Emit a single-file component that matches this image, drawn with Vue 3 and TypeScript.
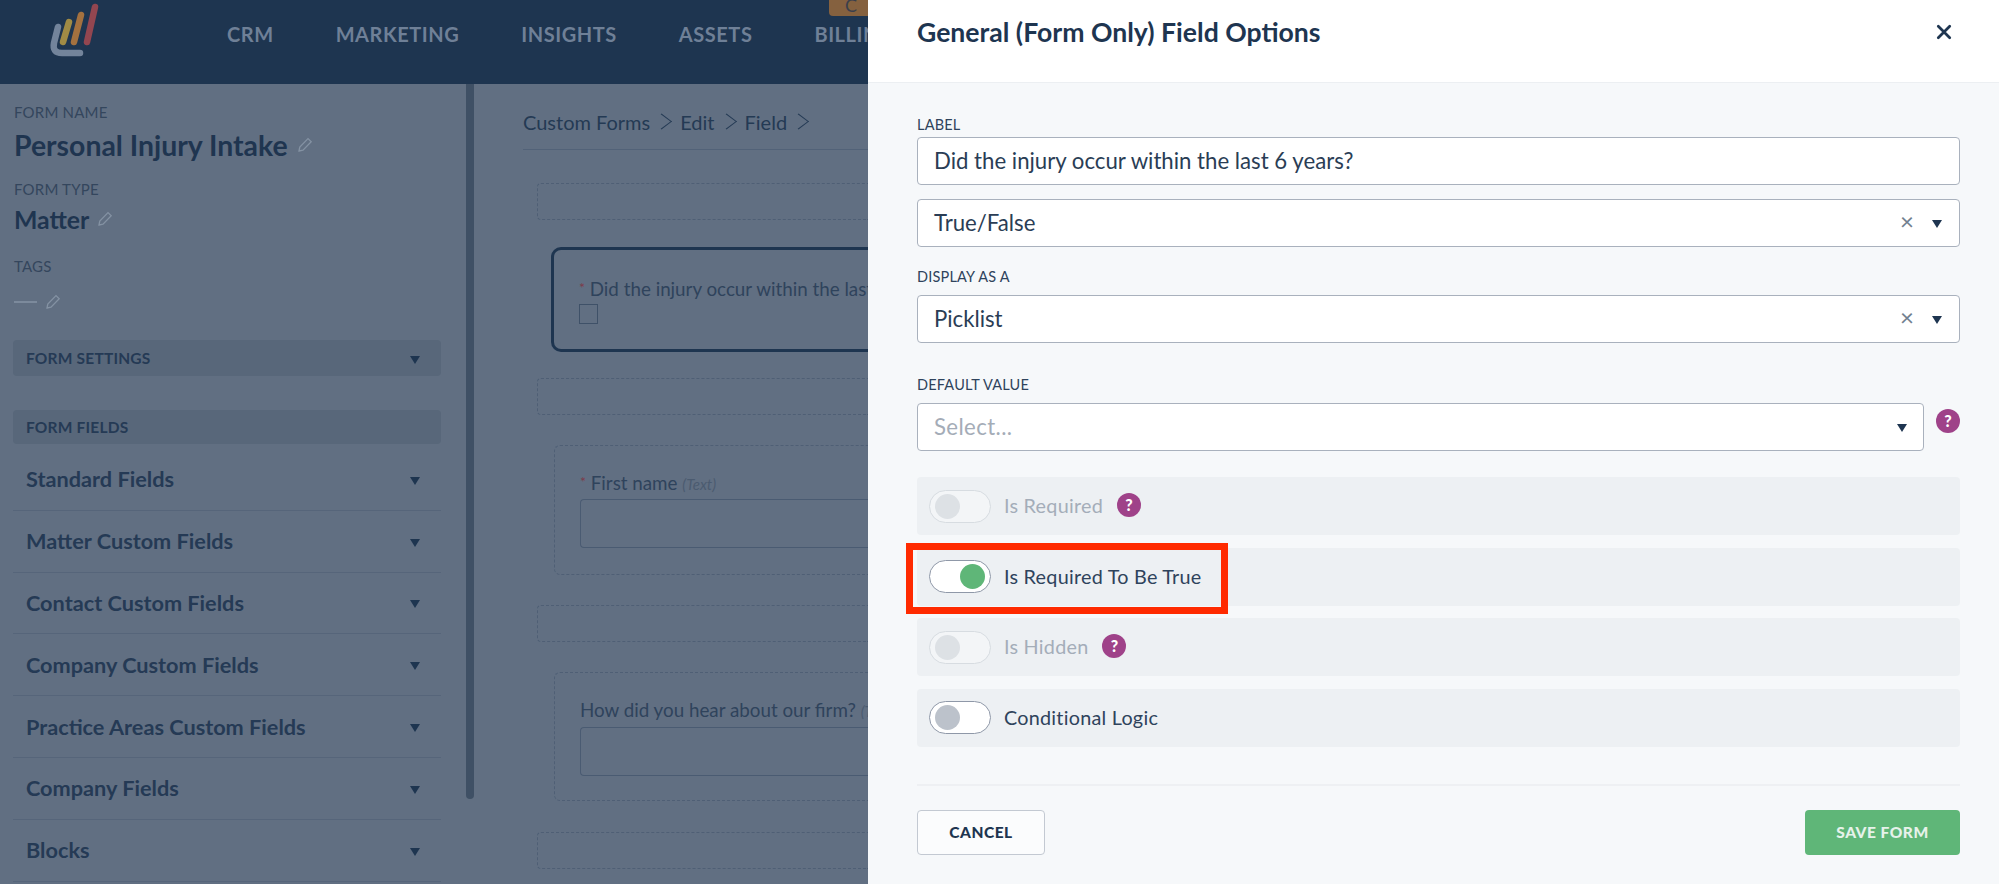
<script setup lang="ts">
const navItems: string[] = ['CRM', 'MARKETING', 'INSIGHTS', 'ASSETS', 'BILLING']
const fieldGroups: string[] = [
  'Standard Fields',
  'Matter Custom Fields',
  'Contact Custom Fields',
  'Company Custom Fields',
  'Practice Areas Custom Fields',
  'Company Fields',
  'Blocks',
]
</script>

<template>
  <div class="screen">
    <div class="page">
      <header class="topbar">
        <svg class="logo" viewBox="0 0 60 60" width="60" height="60" fill="none" stroke-linecap="round">
          <path d="M12 27 L8 43 Q6 53 16 53 L34 53" stroke="#73849b" stroke-width="6.5" />
          <path d="M17 42 L23 22" stroke="#a08b45" stroke-width="6.5" />
          <path d="M28 42 L35 15" stroke="#a4713f" stroke-width="6.5" />
          <path d="M41 42 L49 7" stroke="#934650" stroke-width="6.5" />
        </svg>
        <nav class="nav">
          <span v-for="item in navItems" :key="item" class="nav-item">{{ item }}</span>
        </nav>
        <span class="promo">C</span>
      </header>
      <div class="body">
        <aside class="sidebar">
          <div class="side-inner">
            <div class="meta-label first">FORM NAME</div>
            <div class="form-name">
              Personal Injury Intake
              <svg class="pencil" viewBox="0 0 18 18" width="18" height="18" fill="none" stroke="#8492a3" stroke-width="1.3">
                <path d="M3 15 L3.8 11 L12 2.6 L15.2 5.8 L7 14.2 Z M3 15 L7 14.2" />
              </svg>
            </div>
            <div class="meta-label">FORM TYPE</div>
            <div class="form-type">
              Matter
              <svg class="pencil" viewBox="0 0 18 18" width="18" height="18" fill="none" stroke="#8492a3" stroke-width="1.3">
                <path d="M3 15 L3.8 11 L12 2.6 L15.2 5.8 L7 14.2 Z M3 15 L7 14.2" />
              </svg>
            </div>
            <div class="meta-label tags">TAGS</div>
            <div class="tag-value">
              <span class="dash"></span>
              <svg class="pencil" viewBox="0 0 18 18" width="18" height="18" fill="none" stroke="#8492a3" stroke-width="1.3">
                <path d="M3 15 L3.8 11 L12 2.6 L15.2 5.8 L7 14.2 Z M3 15 L7 14.2" />
              </svg>
            </div>
            <div class="section-bar settings">
              <span>FORM SETTINGS</span><i class="caret left-caret"></i>
            </div>
            <div class="section-bar fields">
              <span>FORM FIELDS</span>
            </div>
            <div v-for="group in fieldGroups" :key="group" class="group-row">
              <span>{{ group }}</span><i class="caret left-caret"></i>
            </div>
          </div>
          <div class="scrollbar"></div>
        </aside>
        <main class="canvas">
          <div class="crumbs">
            <span>Custom Forms</span><b class="chev"></b><span>Edit</span><b class="chev"></b><span>Field</span><b class="chev"></b>
          </div>
          <div class="dropzone first-zone"></div>
          <div class="selected-field">
            <div class="field-label"><em>*</em> Did the injury occur within the last 6 years?</div>
            <span class="checkbox"></span>
          </div>
          <div class="dropzone zone-three"></div>
          <div class="field-card">
            <div class="field-label"><em>*</em> First name <small>(Text)</small></div>
            <div class="fake-input"></div>
          </div>
          <div class="dropzone zone-four"></div>
          <div class="field-card card-two">
            <div class="field-label">How did you hear about our firm? <small>(Text)</small></div>
            <div class="fake-input"></div>
          </div>
          <div class="dropzone zone-five"></div>
        </main>
      </div>
    </div>

    <section class="drawer">
      <header class="drawer-head">
        <h1>General (Form Only) Field Options</h1>
        <svg class="close" viewBox="0 0 14 14" width="16" height="16" stroke="#1e3550" stroke-width="2.4" stroke-linecap="round">
          <path d="M2 2 L12 12 M12 2 L2 12" />
        </svg>
      </header>
      <div class="drawer-body">
        <label class="label">LABEL</label>
        <div class="control">Did the injury occur within the last 6 years?</div>
        <div class="control second">
          <span>True/False</span>
          <span class="clear">×</span><i class="caret"></i>
        </div>
        <label class="label display">DISPLAY AS A</label>
        <div class="control">
          <span>Picklist</span>
          <span class="clear">×</span><i class="caret"></i>
        </div>
        <label class="label default">DEFAULT VALUE</label>
        <div class="default-row">
          <div class="control placeholder">
            <span>Select...</span>
            <i class="caret push"></i>
          </div>
          <span class="help">?</span>
        </div>

        <div class="toggle-list">
          <div class="toggle-row disabled">
            <span class="switch"><span class="knob"></span></span>
            <span class="toggle-text">Is Required</span>
            <span class="help">?</span>
          </div>
          <div class="toggle-row">
            <span class="switch on"><span class="knob"></span></span>
            <span class="toggle-text">Is Required To Be True</span>
            <span class="highlight"></span>
          </div>
          <div class="toggle-row disabled">
            <span class="switch"><span class="knob"></span></span>
            <span class="toggle-text">Is Hidden</span>
            <span class="help">?</span>
          </div>
          <div class="toggle-row">
            <span class="switch"><span class="knob"></span></span>
            <span class="toggle-text">Conditional Logic</span>
          </div>
        </div>

        <footer class="drawer-foot">
          <button class="btn cancel" type="button">CANCEL</button>
          <button class="btn save" type="button">SAVE FORM</button>
        </footer>
      </div>
    </section>
  </div>
</template>

<style>
html,
body {
  margin: 0;
  padding: 0;
  background: #616f82;
  overflow: hidden;
}
</style>

<style scoped>
* {
  box-sizing: border-box;
}
.screen {
  display: flex;
  width: 1999px;
  height: 884px;
  overflow: hidden;
  font-family: Lato, "Open Sans", sans-serif;
  color: #1f3550;
}
.page {
  width: 868px;
  flex: none;
  display: flex;
  flex-direction: column;
  overflow: hidden;
  background: #616f82;
  position: relative;
}
.topbar {
  height: 84px;
  flex: none;
  background: #1e3550;
  display: flex;
  align-items: flex-start;
  padding-left: 46px;
}
.logo {
  flex: none;
}
.nav {
  display: flex;
  gap: 62px;
  margin-left: 121px;
  margin-top: 22px;
  white-space: nowrap;
}
.nav-item {
  color: #6f8097;
  font-size: 20px;
  line-height: 24px;
  font-weight: 700;
  letter-spacing: 0.55px;
}
.promo {
  position: absolute;
  top: -6px;
  left: 829px;
  width: 60px;
  height: 22px;
  padding-left: 16px;
  background: #85613f;
  border-radius: 4px;
  color: #3a3f4c;
  font-size: 18px;
}
.body {
  display: flex;
  flex: 1;
  min-height: 0;
}
.sidebar {
  width: 474px;
  flex: none;
  display: flex;
  align-items: flex-start;
  padding-left: 13px;
}
.side-inner {
  width: 428px;
  flex: none;
}
.scrollbar {
  width: 8px;
  height: 715px;
  margin-left: 25px;
  background: #3f5065;
  border-radius: 0 0 4px 4px;
}
.meta-label {
  font-size: 15px;
  line-height: 18px;
  color: #34465d;
  letter-spacing: 0.2px;
  padding-left: 1px;
}
.meta-label.first {
  margin-top: 19px;
}
.form-name {
  display: flex;
  align-items: center;
  gap: 8px;
  margin-top: 6px;
  height: 36px;
  font-size: 28.4px;
  font-weight: 700;
  padding-left: 1px;
  white-space: nowrap;
}
.form-name + .meta-label {
  margin-top: 17px;
}
.form-type {
  display: flex;
  align-items: center;
  gap: 7px;
  margin-top: 6px;
  height: 30px;
  font-size: 24.8px;
  font-weight: 700;
  padding-left: 1px;
}
.meta-label.tags {
  margin-top: 23px;
}
.tag-value {
  display: flex;
  align-items: center;
  gap: 7px;
  margin-top: 13px;
  height: 28px;
  padding-left: 1px;
}
.dash {
  width: 23px;
  height: 2px;
  background: #7c8a9c;
}
.section-bar {
  display: flex;
  align-items: center;
  justify-content: space-between;
  padding: 0 21px 0 13px;
  background: #58677a;
  border-radius: 4px;
  font-size: 15.5px;
  font-weight: 700;
  letter-spacing: 0.2px;
  color: #253a55;
}
.settings {
  height: 36px;
  margin-top: 24px;
}
.fields {
  height: 34px;
  margin-top: 34px;
  margin-bottom: 5px;
}
.group-row {
  height: 61.8px;
  display: flex;
  align-items: center;
  justify-content: space-between;
  padding: 0 21px 0 13px;
  border-bottom: 1px solid #56657a;
  font-size: 21.7px;
  font-weight: 700;
  color: #253a55;
  white-space: nowrap;
}
.caret {
  display: inline-block;
  flex: none;
  width: 0;
  height: 0;
  border-left: 5.5px solid transparent;
  border-right: 5.5px solid transparent;
  border-top: 8px solid #1e3550;
}
.left-caret {
  margin-top: 3px;
}
.canvas {
  flex: none;
  width: 394px;
  padding: 0 0 0 49px;
}
.crumbs {
  height: 66px;
  display: flex;
  align-items: center;
  padding-top: 10px;
  border-bottom: 1px solid #526278;
  font-size: 20px;
  color: #243a54;
  white-space: nowrap;
  gap: 10px;
}
.chev {
  width: 13px;
  height: 13px;
  border-top: 1.5px solid #243a54;
  border-right: 1.5px solid #243a54;
  transform: rotate(45deg) skew(-8deg, -8deg);
  margin-left: -5px;
  margin-right: 2px;
}
.dropzone {
  height: 37px;
  margin-left: 14px;
  border: 1px dashed #4f5f75;
  border-right: 0;
  border-radius: 4px 0 0 4px;
}
.first-zone {
  margin-top: 33px;
}
.selected-field {
  margin: 27px 0 0 28px;
  height: 105px;
  border: 3px solid #1e3550;
  border-right: 0;
  border-radius: 10px 0 0 10px;
  padding: 27px 0 0 25px;
  white-space: nowrap;
  overflow: hidden;
}
.field-label {
  font-size: 18.8px;
  line-height: 22px;
  color: #2f435c;
  white-space: nowrap;
}
.field-label em {
  color: #7c3b4b;
  font-style: normal;
  font-size: 14px;
  vertical-align: 3px;
}
.field-label small {
  font-size: 15px;
  font-style: italic;
  color: #4b5b70;
}
.checkbox {
  display: block;
  width: 19px;
  height: 20px;
  margin-top: 4px;
  border: 1.5px solid #3f5168;
}
.zone-three {
  margin-top: 26px;
}
.field-card {
  margin: 30px 0 0 31px;
  height: 130px;
  border: 1px dashed #4f5f75;
  border-right: 0;
  border-radius: 6px 0 0 6px;
  padding: 25px 0 0 25px;
  overflow: hidden;
}
.fake-input {
  height: 49px;
  margin-top: 4px;
  border: 1.5px solid #4a5b72;
  border-right: 0;
  border-radius: 4px 0 0 4px;
}
.zone-four {
  margin-top: 30px;
}
.card-two {
  margin-top: 30px;
  height: 129px;
  padding-top: 26px;
}
.card-two .fake-input {
  margin-top: 5px;
}
.zone-five {
  margin-top: 31px;
}
.drawer {
  width: 1131px;
  flex: none;
  display: flex;
  flex-direction: column;
  background: #f6f8fa;
}
.drawer-head {
  height: 83px;
  flex: none;
  background: #fff;
  border-bottom: 1px solid #eceff2;
  display: flex;
  align-items: center;
  justify-content: space-between;
  padding: 0 47px 18px 49px;
}
.drawer-head h1 {
  margin: 0;
  font-size: 26.6px;
  line-height: 30px;
  font-weight: 700;
  color: #1e3550;
}
.close {
  flex: none;
}
.drawer-body {
  padding: 33px 39px 0 49px;
  display: flex;
  flex-direction: column;
}
.label {
  font-size: 14.5px;
  line-height: 18px;
  height: 21px;
  color: #2f435c;
  letter-spacing: 0.2px;
}
.label.display {
  margin-top: 21px;
  height: 27px;
}
.label.default {
  margin-top: 33px;
  height: 27px;
}
.control {
  height: 48px;
  display: flex;
  align-items: center;
  padding: 0 17px 2px 16px;
  background: #fff;
  border: 1.5px solid #a9b1bd;
  border-radius: 4px;
  font-size: 22.2px;
  color: #2a3d55;
}
.control.second {
  margin-top: 14px;
}
.clear {
  margin-left: auto;
  margin-right: 18px;
  font-size: 24px;
  line-height: 20px;
  color: #727f90;
  transform: translateY(-1px);
}
.control .caret {
  border-left-width: 5px;
  border-right-width: 5px;
  border-top-width: 8px;
  margin-top: 4px;
}
.default-row {
  display: flex;
  align-items: center;
  gap: 12px;
}
.default-row .control {
  flex: 1;
}
.default-row .help {
  margin-bottom: 12px;
}
.placeholder {
  color: #a4acb7;
  padding-right: 16px;
  letter-spacing: 0.4px;
}
.push {
  margin-left: auto;
}
.help {
  flex: none;
  width: 24px;
  height: 24px;
  border-radius: 50%;
  background: #9f4289;
  color: #fff;
  font-size: 16px;
  font-weight: 900;
  line-height: 24px;
  text-align: center;
}
.toggle-list {
  display: flex;
  flex-direction: column;
  gap: 12.6px;
  margin-top: 26px;
}
.toggle-row {
  position: relative;
  height: 58px;
  display: flex;
  align-items: center;
  padding-left: 12px;
  background: #edf0f3;
  border-radius: 4px;
}
.switch {
  width: 62px;
  height: 33px;
  flex: none;
  display: flex;
  align-items: center;
  padding: 0 5px;
  background: #fff;
  border: 1.5px solid #8f98a8;
  border-radius: 17px;
}
.knob {
  width: 25px;
  height: 25px;
  border-radius: 50%;
  background: #bcc2cb;
}
.switch.on {
  justify-content: flex-end;
}
.switch.on .knob {
  background: #5fb678;
}
.toggle-text {
  margin-left: 13px;
  padding-bottom: 2px;
  font-size: 19.8px;
  color: #2f435c;
  letter-spacing: 0.25px;
}
.toggle-row .help {
  margin-left: 14px;
  margin-bottom: 2px;
}
.disabled .switch {
  background: #f3f5f7;
  border-color: #d7dce1;
}
.disabled .knob {
  background: #dde1e5;
}
.disabled .toggle-text {
  color: #a4adb9;
}
.highlight {
  position: absolute;
  left: -11px;
  top: -5px;
  width: 322px;
  height: 71px;
  border: 7px solid #ff2a00;
}
.drawer-foot {
  display: flex;
  justify-content: space-between;
  margin-top: 37px;
  padding-top: 24px;
  border-top: 2px solid #eef0f3;
}
.btn {
  height: 45px;
  border-radius: 4px;
  font-family: inherit;
  font-size: 15.5px;
  font-weight: 900;
  letter-spacing: 0.5px;
}
.cancel {
  width: 128px;
  background: #fbfcfd;
  border: 1.5px solid #c3c9d2;
  color: #1e3550;
}
.save {
  width: 155px;
  background: #5fb678;
  border: 0;
  color: #e6f2ea;
}
</style>
